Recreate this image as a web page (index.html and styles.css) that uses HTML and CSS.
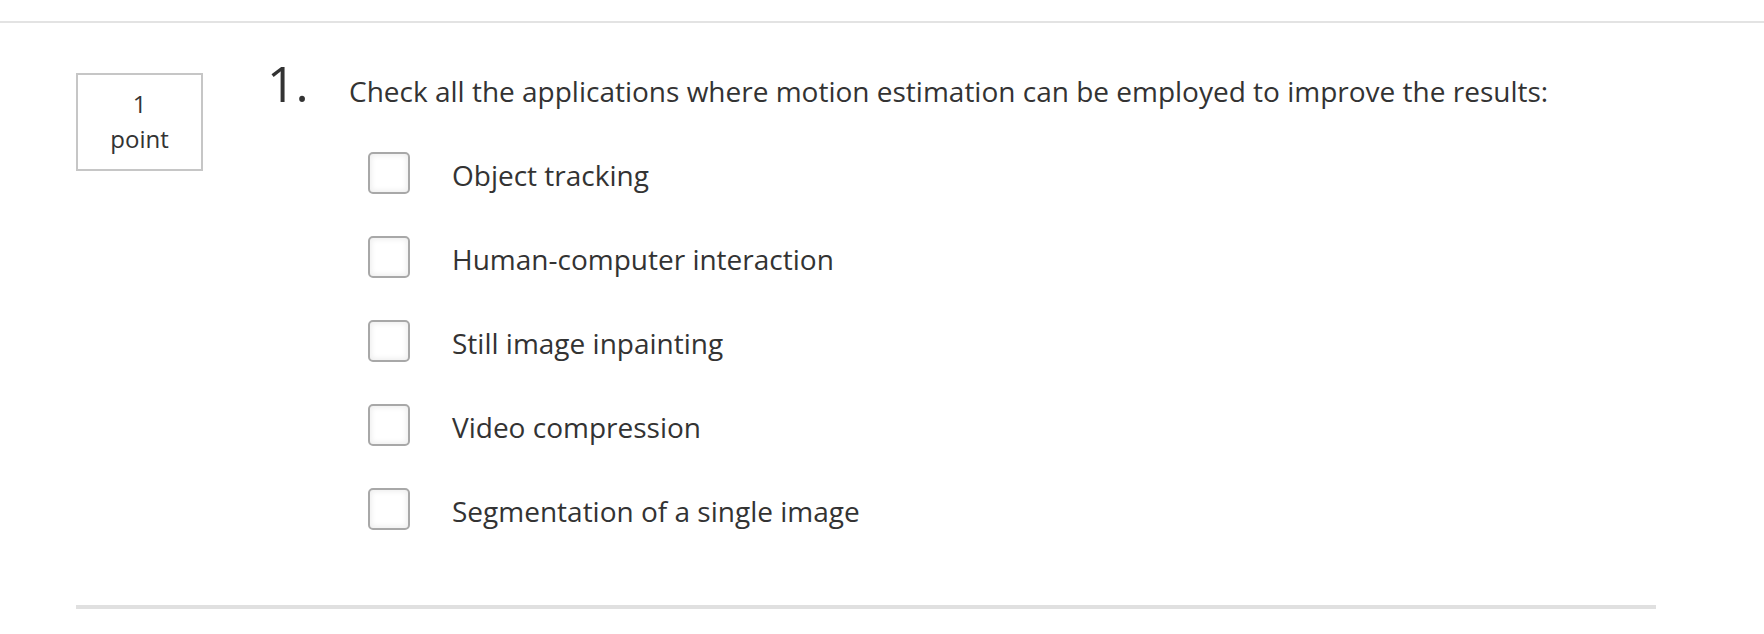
FILE: index.html
```html
<!DOCTYPE html>
<html lang="en">
<head>
<meta charset="utf-8">
<title>Quiz question</title>
<link rel="stylesheet" href="styles.css">
</head>
<body>
<div class="page">
  <div class="top-rule"></div>
  <div class="question">
    <div class="points">
      <span>1</span>
      <span>point</span>
    </div>
    <div class="q-body">
      <div class="prompt">
        <span class="q-num">1.</span>
        <span class="q-text">Check all the applications where motion estimation can be employed to improve the results:</span>
      </div>
      <ul class="options">
        <li class="option"><span class="box"></span><span class="label">Object tracking</span></li>
        <li class="option"><span class="box"></span><span class="label">Human-computer interaction</span></li>
        <li class="option"><span class="box"></span><span class="label">Still image inpainting</span></li>
        <li class="option"><span class="box"></span><span class="label">Video compression</span></li>
        <li class="option"><span class="box"></span><span class="label">Segmentation of a single image</span></li>
      </ul>
    </div>
  </div>
  <div class="bottom-wrap"><div class="bottom-rule"></div></div>
</div>
</body>
</html>
```
FILE: styles.css
```css
html, body {
  margin: 0;
  padding: 0;
  background: #ffffff;
}
body {
  font-family: "Open Sans", "Liberation Sans", sans-serif;
  color: #333333;
}
.page {
  padding-top: 21px;
}
.top-rule {
  height: 2px;
  background: #e3e3e3;
}
.question {
  display: flex;
  align-items: flex-start;
  padding: 50px 0 0 76px;
}
.points {
  box-sizing: border-box;
  width: 127px;
  height: 98px;
  border: 2px solid #c6c6c6;
  display: flex;
  flex-direction: column;
  align-items: center;
  justify-content: center;
  font-size: 24px;
  line-height: 35px;
  padding-bottom: 2px;
}
.q-body {
  margin-left: 64px;
  margin-top: -18px;
}
.prompt {
  display: flex;
  align-items: baseline;
}
.q-num {
  width: 82px;
  font-size: 50px;
  line-height: 56px;
  font-weight: 400;
}
.q-text {
  font-size: 28px;
  line-height: 40px;
}
.options {
  list-style: none;
  margin: 41px 0 0 101px;
  padding: 0;
  display: flex;
  flex-direction: column;
  gap: 42px;
}
.option {
  display: flex;
  align-items: center;
  height: 42px;
}
.box {
  box-sizing: border-box;
  width: 42px;
  height: 42px;
  border: 2px solid #a8a8a8;
  border-radius: 5px;
  background: #ffffff;
  box-shadow: inset 0 0 5px 2px #f0f0f0;
  flex: none;
}
.label {
  margin-left: 42px;
  font-size: 28px;
  line-height: 40px;
  padding-top: 3px;
}
.bottom-wrap {
  padding: 75px 108px 0 76px;
}
.bottom-rule {
  height: 4px;
  background: #e0e0e0;
}
```
